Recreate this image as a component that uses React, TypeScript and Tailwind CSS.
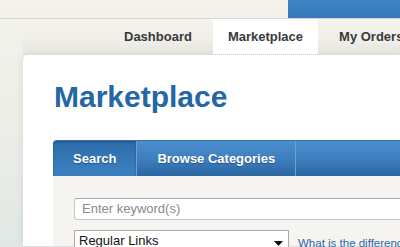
import React from 'react';

const navTabs = [
  { label: 'Dashboard', active: false },
  { label: 'Marketplace', active: true },
  { label: 'My Orders', active: false },
];

export default function App() {
  return (
    <div className="relative h-[247px] w-[400px] overflow-hidden bg-[linear-gradient(180deg,#f3f2ec_0%,#eeeee8_45%,#e1e8e5_100%)] font-['Liberation_Sans',Arial,sans-serif]">
      {/* top strip */}
      <div className="flex h-[19px] border-b border-[#d9d7cf]">
        <div className="flex-1" />
        <div className="w-[112px] bg-[linear-gradient(180deg,#3f86c8,#3577b9)]" />
      </div>

      {/* main nav */}
      <nav className="ml-[23px] flex h-[36px] items-stretch gap-[6px] bg-[linear-gradient(180deg,#f4f3ee_0%,#efeee8_60%,#e4e3dc_100%)] pl-[86px]">
        {navTabs.map((tab) => (
          <a
            key={tab.label}
            className={
              tab.active
                ? 'flex shrink-0 items-center whitespace-nowrap border-b border-dotted border-[#c9c9c9] bg-white px-[15px] text-[13px] font-bold text-[#3a3a3a]'
                : 'flex shrink-0 items-center whitespace-nowrap px-[15px] text-[13px] font-bold text-[#3a3a3a]'
            }
          >
            {tab.label}
          </a>
        ))}
      </nav>

      {/* content panel */}
      <main className="ml-[23px] rounded-tl-[5px] bg-white pl-[30px] shadow-[-2px_0_6px_rgba(0,0,0,0.06)]">
        <h1 className="ml-[1px] pt-[25px] text-[30px] leading-[34px] font-bold text-[#2467a6]">Marketplace</h1>

        <div className="mt-[26px]">
          <div className="flex h-[36px] w-[400px] overflow-hidden rounded-tl-[4px] border-t border-[#3470ab] bg-[linear-gradient(180deg,#4b8ecd_0%,#3e7fbf_50%,#2a65a1_100%)]">
            <a className="flex shrink-0 items-center bg-[linear-gradient(180deg,#2e6caa_0%,#3577b7_50%,#3d80c0_100%)] px-[20px] text-[13px] font-bold text-white shadow-[inset_0_1px_3px_rgba(0,0,0,0.25)] [text-shadow:0_1px_1px_rgba(0,0,0,0.3)]">
              Search
            </a>
            <a className="flex shrink-0 items-center border-x border-[#6d9fd0] px-[20px] text-[13px] font-bold whitespace-nowrap text-white [text-shadow:0_1px_1px_rgba(0,0,0,0.3)]">
              Browse Categories
            </a>
            <div className="flex-1" />
          </div>

          <div className="h-[70px] bg-[#f5f4f0] pt-[22px] pl-[21px]">
            <div className="flex h-[22px] w-[400px] items-center rounded-[3px] border border-[#c7c7c7] border-t-[#a9a9a9] bg-white pl-[7px] text-[13px] text-[#8a8a8a]">
              Enter keyword(s)
            </div>
            <div className="mt-[10px] flex items-start">
              <div className="relative flex h-[22px] w-[215px] shrink-0 items-center border border-[#a9a9a9] bg-white pl-[4px] text-[13px] whitespace-nowrap text-[#111]">
                Regular Links
                <svg className="absolute top-[10px] right-[5px]" width="9" height="5" viewBox="0 0 9 5">
                  <path d="M0 0h9L4.5 5z" fill="#111" />
                </svg>
              </div>
              <a className="mt-[5px] ml-[9px] shrink-0 text-[11.5px] whitespace-nowrap text-[#2f67a6]">What is the difference between regular links</a>
            </div>
          </div>
        </div>
      </main>
    </div>
  );
}
